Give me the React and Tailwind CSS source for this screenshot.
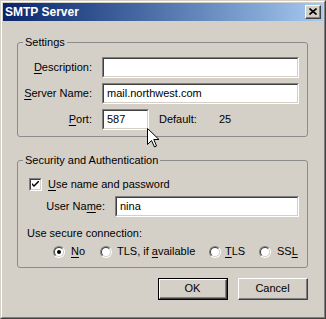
import React from "react";

function Field({ className, value }) {
  return (
    <div className={`${className} h-[21px] border border-t-[#808080] border-l-[#808080] border-b-white border-r-white`}>
      <div className="h-full border border-t-[#404040] border-l-[#404040] border-b-[#D4D0C8] border-r-[#D4D0C8] bg-white pl-[3px] flex items-center text-black">
        {value}
      </div>
    </div>
  );
}

function Radio({ checked }) {
  return (
    <div className="w-[12px] h-[12px] shrink-0 rounded-full border border-t-[#808080] border-l-[#808080] border-b-white border-r-white">
      <div className="w-full h-full rounded-full border border-t-[#404040] border-l-[#404040] border-b-[#D4D0C8] border-r-[#D4D0C8] bg-white flex items-center justify-center">
        {checked && <div className="w-[4px] h-[4px] rounded-full bg-black" />}
      </div>
    </div>
  );
}

function U({ children }) {
  return <span className="underline underline-offset-[2px]">{children}</span>;
}

export default function App() {
  return (
    <div className="w-[326px] h-[319px] relative font-['Liberation_Sans',Arial,sans-serif] text-[11px] leading-[13px] text-black bg-[#D4D0C8] border border-t-[#D4D0C8] border-l-[#D4D0C8] border-r-[#404040] border-b-[#404040]">
      <div className="w-full h-full border border-t-white border-l-white border-r-[#808080] border-b-[#808080] p-px">
        {/* title bar */}
        <div className="h-[18px] flex items-center justify-between pl-[2px] pr-[2px] bg-gradient-to-r from-[#0A246A] to-[#A6CAF0]">
          <span className="text-white font-bold text-[12px]">SMTP Server</span>
          <div className="w-[16px] h-[14px] bg-[#D4D0C8] border border-t-white border-l-white border-r-[#404040] border-b-[#404040]">
            <div className="w-full h-full border-r border-b border-r-[#808080] border-b-[#808080] flex items-center justify-center">
              <svg width="8" height="7" viewBox="0 0 8 7">
                <path d="M0.5 0.5 L7.5 6.5 M7.5 0.5 L0.5 6.5" stroke="#000" strokeWidth="1.6" />
              </svg>
            </div>
          </div>
        </div>

        {/* body */}
        <div className="pl-[14px] pr-[15px]">
          <fieldset className="mt-[15px] border border-[#8c8c8c] rounded-[3px] pt-[8px] pb-[6px]">
            <legend className="ml-[5px] px-[2px]">Settings</legend>
            <div className="flex flex-col gap-[5px]">
              <div className="flex items-center gap-[10px]">
                <div className="w-[74px] text-right"><U>D</U>escription:</div>
                <Field className="w-[197px]" value="" />
              </div>
              <div className="flex items-center gap-[10px]">
                <div className="w-[74px] text-right"><U>S</U>erver Name:</div>
                <Field className="w-[197px]" value="mail.northwest.com" />
              </div>
              <div className="flex items-center gap-[10px]">
                <div className="w-[74px] text-right"><U>P</U>ort:</div>
                <Field className="w-[47px]" value="587" />
                <div className="w-[50px]">Default:</div>
                <div>25</div>
              </div>
            </div>
          </fieldset>

          <fieldset className="mt-[17px] border border-[#8c8c8c] rounded-[3px] pt-[11px] pb-[9px]">
            <legend className="ml-[5px] px-[2px]">Security and Authentication</legend>
            <div className="flex items-center gap-[6px] pl-[11px]">
              <div className="w-[13px] h-[13px] border border-t-[#808080] border-l-[#808080] border-b-white border-r-white">
                <div className="w-full h-full border border-t-[#404040] border-l-[#404040] border-b-[#D4D0C8] border-r-[#D4D0C8] bg-white flex items-center justify-center">
                  <svg width="7" height="7" viewBox="0 0 7 7">
                    <path d="M0 2 L0 4 L2 6 L7 1 L7 -1 L2 4 Z" fill="#000" />
                  </svg>
                </div>
              </div>
              <div><U>U</U>se name and password</div>
            </div>
            <div className="flex items-center gap-[10px] mt-[5px]">
              <div className="w-[87px] text-right">User Na<U>m</U>e:</div>
              <Field className="w-[184px]" value="nina" />
            </div>
            <div className="pl-[9px] mt-[10px]">Use secure connection:</div>
            <div className="flex items-center pl-[35px] mt-[5px]">
              <div className="w-[47px] flex items-center gap-[6px]">
                <Radio checked />
                <span><U>N</U>o</span>
              </div>
              <div className="w-[109px] flex items-center gap-[5px]">
                <Radio />
                <span>TLS, if <U>a</U>vailable</span>
              </div>
              <div className="w-[50px] flex items-center gap-[4px]">
                <Radio />
                <span><U>T</U>LS</span>
              </div>
              <div className="flex items-center gap-[6px]">
                <Radio />
                <span>SS<U>L</U></span>
              </div>
            </div>
          </fieldset>

          <div className="mt-[10px] flex justify-end gap-[10px]">
            <div className="w-[70px] h-[22px] border border-black">
              <div className="w-full h-full border border-t-white border-l-white border-r-[#404040] border-b-[#404040]">
                <div className="w-full h-full border-r border-b border-r-[#808080] border-b-[#808080] flex items-center justify-center">OK</div>
              </div>
            </div>
            <div className="w-[70px] h-[22px] border border-t-white border-l-white border-r-[#404040] border-b-[#404040]">
              <div className="w-full h-full border-r border-b border-r-[#808080] border-b-[#808080] flex items-center justify-center">Cancel</div>
            </div>
          </div>
        </div>
      </div>

      {/* mouse cursor */}
      <svg className="absolute left-[146px] top-[127px]" width="13" height="20" viewBox="0 0 13 20">
        <path d="M0.5 0.5 L0.5 16.5 L4.5 12.5 L7.5 19 L9.5 18 L6.8 11.5 L12 11.5 Z" fill="#fff" stroke="#000" strokeWidth="1" strokeLinejoin="miter" />
      </svg>
    </div>
  );
}
